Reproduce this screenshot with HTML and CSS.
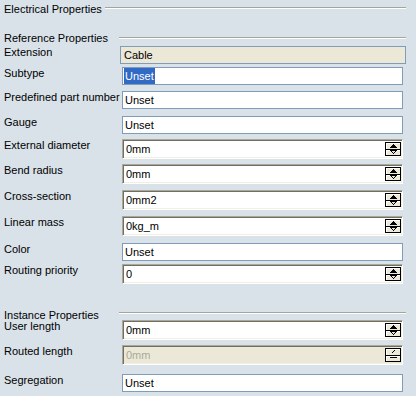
FILE: index.html
```html
<!DOCTYPE html>
<html lang="en">
<head>
    <meta charset="UTF-8">
    <title>Electrical Properties</title>
    <link rel="stylesheet" href="styles.css">
</head>
<body>
    <div class="panel">
        <div class="group-title">
            <span class="title-text">Electrical Properties</span>
            <span class="etched"></span>
        </div>

        <div class="sub-title ref-title">
            <span>Reference Properties</span>
            <span class="etched"></span>
        </div>

        <div class="props ref-props">
            <label>Extension</label>
            <div class="field readonly">Cable</div>

            <label>Subtype</label>
            <div class="field"><span class="selected">Unset</span></div>

            <label>Predefined part number</label>
            <div class="field">Unset</div>

            <label>Gauge</label>
            <div class="field">Unset</div>

            <label>External diameter</label>
            <div class="spin">
                <span class="spin-value">0mm</span>
                <span class="spin-btns">
                    <span class="spin-btn"><svg width="7" height="4" viewBox="0 0 7 4"><path d="M3 0h1v1h1v1h1v1h1v1H0V3h1V2h1V1h1z"/></svg></span>
                    <span class="spin-btn"><svg width="7" height="4" viewBox="0 0 7 4"><path d="M0 0h7v1H6v1H5v1H4v1H3V3H2V2H1V1H0zM2 1v1h1v1h1V2h1V1z"/></svg></span>
                </span>
            </div>

            <label>Bend radius</label>
            <div class="spin">
                <span class="spin-value">0mm</span>
                <span class="spin-btns">
                    <span class="spin-btn"><svg width="7" height="4" viewBox="0 0 7 4"><path d="M3 0h1v1h1v1h1v1h1v1H0V3h1V2h1V1h1z"/></svg></span>
                    <span class="spin-btn"><svg width="7" height="4" viewBox="0 0 7 4"><path d="M0 0h7v1H6v1H5v1H4v1H3V3H2V2H1V1H0zM2 1v1h1v1h1V2h1V1z"/></svg></span>
                </span>
            </div>

            <label>Cross-section</label>
            <div class="spin">
                <span class="spin-value">0mm2</span>
                <span class="spin-btns">
                    <span class="spin-btn"><svg width="7" height="4" viewBox="0 0 7 4"><path d="M3 0h1v1h1v1h1v1h1v1H0V3h1V2h1V1h1z"/></svg></span>
                    <span class="spin-btn"><svg width="7" height="4" viewBox="0 0 7 4"><path d="M0 0h7v1H6v1H5v1H4v1H3V3H2V2H1V1H0zM2 1v1h1v1h1V2h1V1z"/></svg></span>
                </span>
            </div>

            <label>Linear mass</label>
            <div class="spin">
                <span class="spin-value">0kg_m</span>
                <span class="spin-btns">
                    <span class="spin-btn"><svg width="7" height="4" viewBox="0 0 7 4"><path d="M3 0h1v1h1v1h1v1h1v1H0V3h1V2h1V1h1z"/></svg></span>
                    <span class="spin-btn"><svg width="7" height="4" viewBox="0 0 7 4"><path d="M0 0h7v1H6v1H5v1H4v1H3V3H2V2H1V1H0zM2 1v1h1v1h1V2h1V1z"/></svg></span>
                </span>
            </div>

            <label>Color</label>
            <div class="field">Unset</div>

            <label>Routing priority</label>
            <div class="spin">
                <span class="spin-value">0</span>
                <span class="spin-btns">
                    <span class="spin-btn"><svg width="7" height="4" viewBox="0 0 7 4"><path d="M3 0h1v1h1v1h1v1h1v1H0V3h1V2h1V1h1z"/></svg></span>
                    <span class="spin-btn"><svg width="7" height="4" viewBox="0 0 7 4"><path d="M0 0h7v1H6v1H5v1H4v1H3V3H2V2H1V1H0zM2 1v1h1v1h1V2h1V1z"/></svg></span>
                </span>
            </div>
        </div>

        <div class="sub-title inst-title">
            <span>Instance Properties</span>
            <span class="etched"></span>
        </div>

        <div class="props inst-props">
            <label>User length</label>
            <div class="spin">
                <span class="spin-value">0mm</span>
                <span class="spin-btns">
                    <span class="spin-btn"><svg width="7" height="4" viewBox="0 0 7 4"><path d="M3 0h1v1h1v1h1v1h1v1H0V3h1V2h1V1h1z"/></svg></span>
                    <span class="spin-btn"><svg width="7" height="4" viewBox="0 0 7 4"><path d="M0 0h7v1H6v1H5v1H4v1H3V3H2V2H1V1H0zM2 1v1h1v1h1V2h1V1z"/></svg></span>
                </span>
            </div>

            <label>Routed length</label>
            <div class="spin disabled">
                <span class="spin-value">0mm</span>
                <span class="spin-btns">
                    <span class="spin-btn"><svg width="7" height="4" viewBox="0 0 7 4"><path d="M4 0h1v1H4v1H3v1H2V2h1V1h1z"/></svg></span>
                    <span class="spin-btn"><svg width="7" height="4" viewBox="0 0 7 4"><path d="M0 1h7v1H0z"/></svg></span>
                </span>
            </div>

            <label>Segregation</label>
            <div class="field">Unset</div>
        </div>
    </div>
</body>
</html>
```

FILE: styles.css
```css
* {
    margin: 0;
    padding: 0;
    box-sizing: border-box;
}

body {
    background-color: #d9e2e9;
    font-family: "Liberation Sans", Arial, sans-serif;
    font-size: 11px;
    line-height: 13px;
    color: #000;
}

.panel {
    padding: 3px 10px 0 4px;
}

/* titres de groupe avec trait grave */
.group-title {
    display: flex;
    height: 13px;
}

.group-title .title-text {
    width: 101px;
}

.etched {
    display: block;
    height: 2px;
    border-top: 1px solid #a5a59f;
    border-bottom: 1px solid #fff;
}

.group-title .etched {
    flex: 1;
    margin-top: 4px;
}

.sub-title {
    display: grid;
    grid-template-columns: 115px 1fr;
    height: 13px;
}

.sub-title .etched {
    margin-top: 5px;
}

.ref-title {
    margin-top: 16px;
}

.inst-title {
    margin-top: 21px;
}

.inst-title .etched {
    margin-top: 3px;
}

/* grilles des proprietes */
.props {
    display: grid;
    grid-template-columns: 116px 1fr;
}

.ref-props {
    margin-top: 1px;
    grid-template-rows: 21px 24px 25px 23px 25px 26px 26px 27px 21px 24px;
}

.inst-props {
    margin-top: -2px;
    grid-template-rows: 25px 29px 24px;
}

.props label {
    white-space: nowrap;
}

.field {
    height: 18px;
    margin: 0 3px 0 2px;
    padding-left: 2px;
    background-color: #fff;
    border: 1px solid #7f9db9;
    line-height: 16px;
}

.field.readonly {
    margin: 0;
    padding-left: 3px;
    background-color: #ebe8d8;
}

.selected {
    display: inline-block;
    background-color: #316ac5;
    color: #fff;
    padding: 0 1px;
    margin-left: -1px;
}

/* champ numerique avec fleches */
.spin {
    display: flex;
    height: 20px;
    margin: 0 3px 0 2px;
    background-color: #fff;
    border: 1px solid;
    border-color: #aca899 #fff #fff #aca899;
    box-shadow: inset 1px 1px 0 #716f64, inset -1px -1px 0 #f1efe2;
    padding: 1px;
}

.spin-value {
    flex: 1;
    padding-left: 2px;
    line-height: 16px;
}

.spin.disabled {
    background-color: #ebe8d8;
}

.spin.disabled .spin-value {
    color: #aca899;
}

.spin-btns {
    display: flex;
    flex-direction: column;
    width: 16px;
    margin: 1px 0 1px 0;
    border: 1px solid #000;
}

.spin-btn {
    flex: 1;
    display: flex;
    align-items: center;
    justify-content: center;
    background-color: #ece9d8;
    box-shadow: inset 1px 1px 0 #fff;
}

.spin-btn + .spin-btn {
    border-top: 1px solid #000;
}

.spin-btn svg {
    display: block;
    fill: #000;
}
```
